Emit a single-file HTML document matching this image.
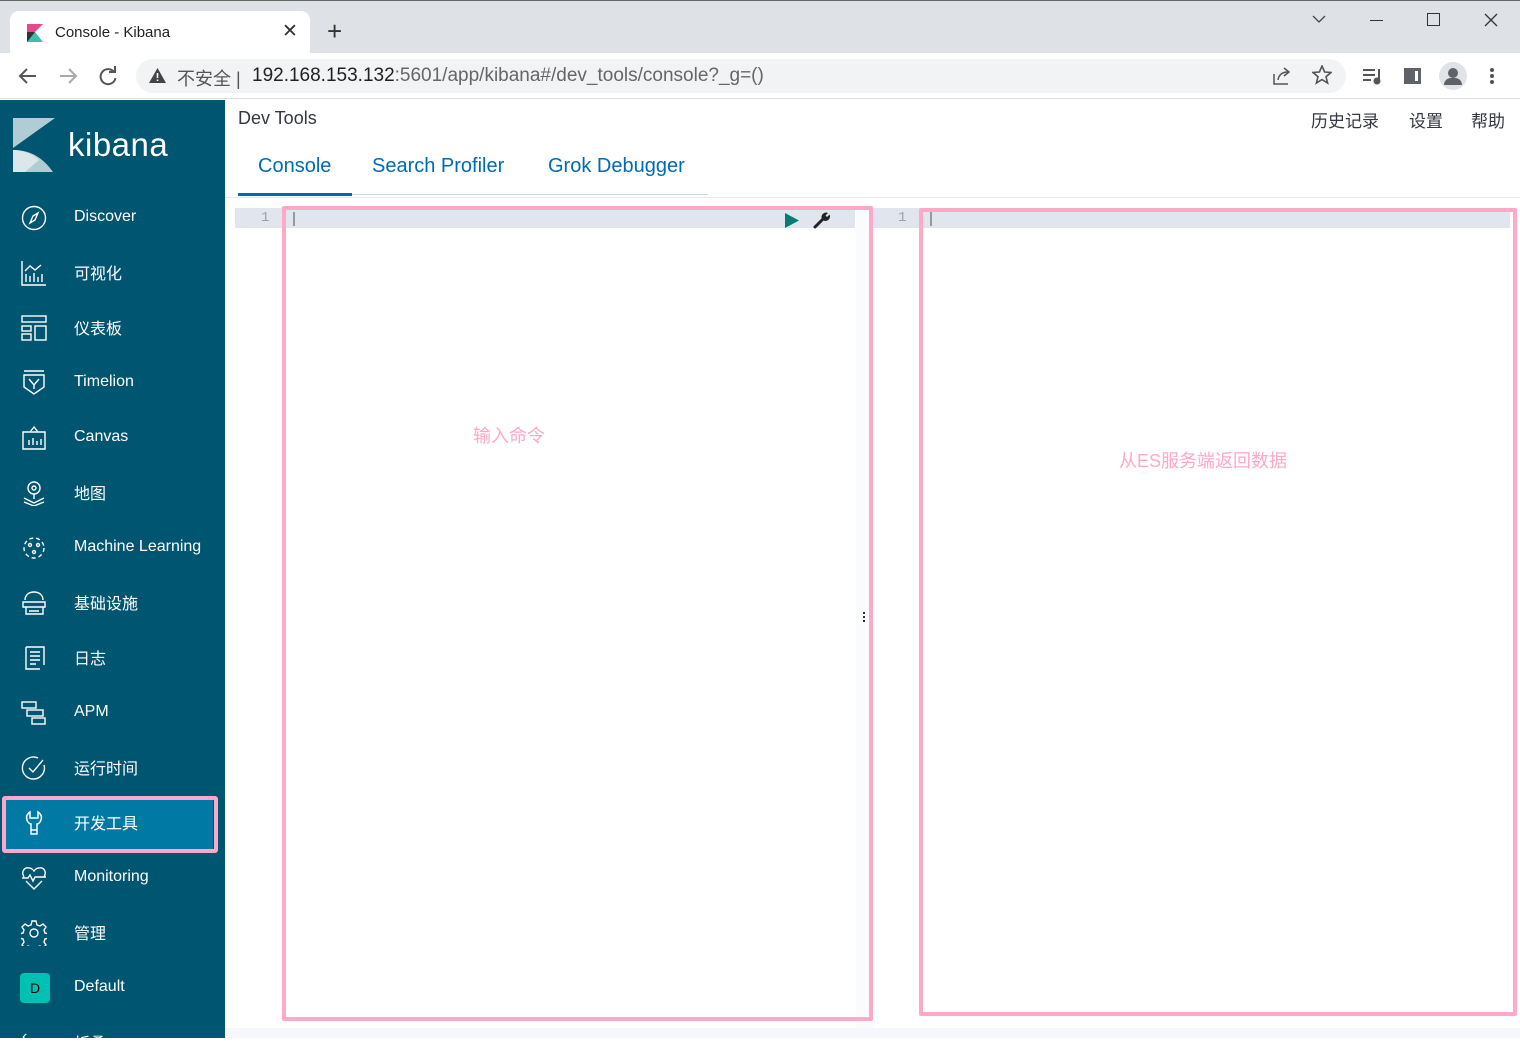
<!DOCTYPE html>
<html><head><meta charset="utf-8"><style>
*{margin:0;padding:0;box-sizing:border-box}
body{width:1520px;height:1038px;overflow:hidden;font-family:"Liberation Sans","Noto Sans CJK SC",sans-serif;background:#fff;position:relative}
.abs{position:absolute}
.tabbar{left:0;top:0;width:1520px;height:53px;background:#dee1e6;border-top:1px solid #666}
.tab{left:10px;top:11px;width:300px;height:43px;background:#fff;border-radius:9px 9px 0 0}
.toolbar{left:0;top:53px;width:1520px;height:46px;background:#fff;border-bottom:1px solid #ddd}
.omni{left:136px;top:59px;width:1210px;height:34px;background:#f1f3f4;border-radius:17px}
.side{left:0;top:100px;width:225px;height:938px;background:#005571}
.nav{position:absolute;left:0;width:225px;height:55px;color:#fff;font-size:16px}
.nav span{position:absolute;left:74px;top:50%;transform:translateY(-55%)}
.nav svg{position:absolute;left:21px;top:15px}
.pink{position:absolute;border:4px solid #ffa8c8}
</style></head><body>
<div class="abs tabbar"></div>
<div class="abs tab"></div>
<svg class="abs" style="left:27px;top:24px" width="16" height="18" viewBox="0 0 16 18"><path d="M0 0h16L8 8H0z" fill="#e8488b"/><path d="M0 8h8l8 10H0z" fill="#3ebeb0"/><path d="M0 8h8L0 18z" fill="#333"/></svg>
<div class="abs" style="left:55px;top:24px;font-size:15px;color:#222">Console - Kibana</div>
<div class="abs" style="left:282px;top:20px;font-size:19px;color:#333">✕</div>
<div class="abs" style="left:327px;top:16px;font-size:26px;color:#333">+</div>
<svg class="abs" style="left:1312px;top:14px" width="14" height="10"><path d="M1 2l6 6 6-6" fill="none" stroke="#444" stroke-width="1.3"/></svg>
<div class="abs" style="left:1370px;top:20px;width:13px;height:1px;background:#333"></div>
<div class="abs" style="left:1427px;top:13px;width:13px;height:13px;border:1px solid #333"></div>
<svg class="abs" style="left:1484px;top:13px" width="14" height="14"><path d="M1 1l12 12M13 1L1 13" stroke="#333" stroke-width="1.3"/></svg>
<div class="abs toolbar"></div>
<svg class="abs" style="left:18px;top:67px" width="20" height="18"><path d="M18 9H3M9 2L2 9l7 7" fill="none" stroke="#555" stroke-width="2"/></svg>
<svg class="abs" style="left:58px;top:67px" width="20" height="18"><path d="M2 9h15M11 2l7 7-7 7" fill="none" stroke="#aaa" stroke-width="2"/></svg>
<svg class="abs" style="left:98px;top:66px" width="20" height="20"><path d="M16 6A7.5 7.5 0 1 0 17.5 12" fill="none" stroke="#555" stroke-width="2"/><path d="M11 6h6V0" fill="none" stroke="#555" stroke-width="2"/></svg>
<div class="abs omni"></div>
<svg class="abs" style="left:149px;top:68px" width="17" height="15"><path d="M8.5 0L17 15H0z" fill="#444"/><path d="M8.5 5v5M8.5 11.5v1.5" stroke="#fff" stroke-width="1.6"/></svg>
<div class="abs" style="left:177px;top:65px;font-size:18px;color:#555">不安全 | </div>
<div class="abs" style="left:252px;top:65px;font-size:19px;color:#202124">192.168.153.132<span style="color:#666">:5601/app/kibana#/dev_tools/console?_g=()</span></div>
<svg class="abs" style="left:1272px;top:66px" width="20" height="19" fill="none" stroke="#555" stroke-width="1.5"><path d="M2 8v10h14M6 14c1-6 5-8 10-8M12 2l5 4-5 4"/></svg>
<svg class="abs" style="left:1312px;top:65px" width="20" height="20"><path d="M10 1l2.6 6 6.4.5-5 4.2 1.6 6.3L10 14.6 4.4 18l1.6-6.3-5-4.2L7.4 7z" fill="none" stroke="#555" stroke-width="1.6"/></svg>
<svg class="abs" style="left:1362px;top:67px" width="22" height="18" fill="none" stroke="#555" stroke-width="2"><path d="M1 3h12M1 8h12M1 13h8M17 2v12"/><circle cx="15" cy="14" r="2.5" fill="#555"/></svg>
<div class="abs" style="left:1404px;top:68px;width:17px;height:16px;border:3px solid #5f6368;border-left-width:11px;background:#fff"></div>
<div class="abs" style="left:1439px;top:62px;width:28px;height:28px;border-radius:50%;background:#e0e3e7"></div>
<div class="abs" style="left:1448px;top:68px;width:10px;height:10px;border-radius:50%;background:#5f6368"></div>
<div class="abs" style="left:1444px;top:78px;width:18px;height:7px;border-radius:8px 8px 0 0;background:#5f6368"></div>
<div class="abs" style="left:1490px;top:68px;width:4px;height:4px;border-radius:50%;background:#555;box-shadow:0 6px 0 #555,0 12px 0 #555"></div>

<div class="abs side">
<svg class="abs" style="left:13px;top:18px" width="42" height="54" viewBox="0 0 42 54"><path d="M0 0h42L0 30z" fill="#b0ccd5"/><path d="M0 32c18 0 30 8 40 22H0z" fill="#b0ccd5"/><path d="M0 32c10 0 20 4 26 10L12 54H0z" fill="#dbe7eb"/></svg>
<div class="abs" style="left:68px;top:26px;font-size:33px;color:#fff;letter-spacing:0.5px">kibana</div>
</div>
<div class="nav" style="top:190px"><svg width="26" height="26" viewBox="0 0 26 26" fill="none" stroke="#fff" stroke-width="1.4"><circle cx="13" cy="13" r="11.5"/><path d="M17 8l-3 7-5 3 3-7z"/></svg><span>Discover</span></div>
<div class="nav" style="top:245px"><svg width="26" height="26" viewBox="0 0 26 26" fill="none" stroke="#fff" stroke-width="1.4"><path d="M1 1v24h24M5 22v-8M9 22v-6M13 22v-9M17 22v-5M21 22v-8M4 11l5-5 5 4 6-5"/></svg><span>可视化</span></div>
<div class="nav" style="top:300px"><svg width="26" height="26" viewBox="0 0 26 26" fill="none" stroke="#fff" stroke-width="1.4"><rect x="1" y="1" width="24" height="6"/><rect x="1" y="11" width="9" height="5"/><rect x="1" y="19" width="9" height="6"/><rect x="14" y="11" width="11" height="14"/></svg><span>仪表板</span></div>
<div class="nav" style="top:355px"><svg width="26" height="26" viewBox="0 0 26 26" fill="none" stroke="#fff" stroke-width="1.4"><path d="M3 1h20M3 5h20v12l-10 7-10-7zM8 9l5 6 5-6M13 15v4"/></svg><span>Timelion</span></div>
<div class="nav" style="top:410px"><svg width="26" height="26" viewBox="0 0 26 26" fill="none" stroke="#fff" stroke-width="1.4"><path d="M13 2l-4 5h8zM2 7h22v17H2zM8 20v-5M12 20v-7M16 20v-4M20 20v-6"/></svg><span>Canvas</span></div>
<div class="nav" style="top:465px"><svg width="26" height="26" viewBox="0 0 26 26" fill="none" stroke="#fff" stroke-width="1.4"><circle cx="13" cy="8" r="6"/><circle cx="13" cy="8" r="2"/><path d="M13 14v5M3 18l10 5 10-5M3 22l10 4 10-4"/></svg><span>地图</span></div>
<div class="nav" style="top:520px"><svg width="26" height="26" viewBox="0 0 26 26" fill="none" stroke="#fff" stroke-width="1.4"><circle cx="13" cy="13" r="10" stroke-dasharray="4 3"/><circle cx="9" cy="10" r="1.5"/><circle cx="17" cy="10" r="1.5"/><circle cx="13" cy="17" r="1.5"/></svg><span>Machine Learning</span></div>
<div class="nav" style="top:575px"><svg width="26" height="26" viewBox="0 0 26 26" fill="none" stroke="#fff" stroke-width="1.4"><path d="M4 10c0-5 4-8 9-8s9 3 9 8M2 12h22v5H2zM5 17v7h17v-7M8 21h10"/></svg><span>基础设施</span></div>
<div class="nav" style="top:630px"><svg width="26" height="26" viewBox="0 0 26 26" fill="none" stroke="#fff" stroke-width="1.4"><path d="M5 2h18v18M5 2v22h14M9 7h10M9 11h10M9 15h10M9 19h6"/></svg><span>日志</span></div>
<div class="nav" style="top:685px"><svg width="26" height="26" viewBox="0 0 26 26" fill="none" stroke="#fff" stroke-width="1.4"><rect x="1" y="2" width="14" height="6"/><rect x="6" y="10" width="16" height="6"/><rect x="11" y="18" width="13" height="6"/></svg><span>APM</span></div>
<div class="nav" style="top:740px"><svg width="26" height="26" viewBox="0 0 26 26" fill="none" stroke="#fff" stroke-width="1.4"><path d="M23 10a11 11 0 1 1-6-7M8 13l4 4 10-12"/></svg><span>运行时间</span></div>
<div class="nav" style="left:6px;width:207px;height:51px;background:#0079a5;top:800px"></div>
<div class="pink" style="left:2px;top:796px;width:216px;height:57px;border-radius:3px"></div>
<div class="nav" style="top:795px;background:transparent"><svg width="26" height="26" viewBox="0 0 26 26" fill="none" stroke="#fff" stroke-width="1.5"><path d="M9 2v6h8V2c3 2 4 5 3 8s-3 4-4 4v10h-6V14c-1 0-3-1-4-4s0-6 3-8zM10 20h6"/></svg><span>开发工具</span></div>
<div class="nav" style="top:850px"><svg width="26" height="26" viewBox="0 0 26 26" fill="none" stroke="#fff" stroke-width="1.4"><path d="M3 12C0 7 3 2 8 3c3 0 5 3 5 3s2-3 5-3c5-1 8 4 5 9M1 13h6l2-3 3 6 2-4h11M5 16l8 8 8-8"/></svg><span>Monitoring</span></div>
<div class="nav" style="top:905px"><svg width="26" height="26" viewBox="0 0 26 26" fill="none" stroke="#fff" stroke-width="1.4"><path d="M11 1h4l1 4 3 1 3-2 3 3-2 3 1 3 4 1v4l-4 1-1 3 2 3-3 3-3-2-3 1-1 4h-4l-1-4-3-1-3 2-3-3 2-3-1-3-4-1v-4l4-1 1-3-2-3 3-3 3 2 3-1z"/><circle cx="13" cy="13" r="4"/></svg><span>管理</span></div>
<div class="nav" style="top:960px"><div class="abs" style="left:20px;top:13px;width:30px;height:30px;background:#00bfb3;border-radius:4px;color:#000;font-size:14px;text-align:center;line-height:30px">D</div><span>Default</span></div>
<div class="abs" style="left:22px;top:1028px;font-size:16px;color:#fff">‹</div>
<div class="abs" style="left:74px;top:1030px;font-size:16px;color:#fff">折叠</div>

<div class="abs" style="left:238px;top:108px;font-size:18px;color:#343741">Dev Tools</div>
<div class="abs" style="left:1311px;top:107px;font-size:17px;color:#343741">历史记录</div>
<div class="abs" style="left:1409px;top:107px;font-size:17px;color:#343741">设置</div>
<div class="abs" style="left:1471px;top:107px;font-size:17px;color:#343741">帮助</div>
<div class="abs" style="left:258px;top:155px;font-size:20px;color:#006bb4">Console</div>
<div class="abs" style="left:372px;top:155px;font-size:20px;color:#006bb4">Search Profiler</div>
<div class="abs" style="left:548px;top:155px;font-size:20px;color:#006bb4">Grok Debugger</div>
<div class="abs" style="left:238px;top:194px;width:470px;height:1px;background:#d3dae6"></div>
<div class="abs" style="left:238px;top:193px;width:114px;height:3px;background:#006bb4"></div>
<div class="abs" style="left:225px;top:197px;width:1295px;height:1px;background:#e6e9ee"></div>

<div class="abs" style="left:235px;top:208px;width:620px;height:20px;background:#e0e5ee"></div>
<div class="abs" style="left:261px;top:210px;font-size:14px;color:#98a2b3;font-family:'Liberation Mono',monospace">1</div>
<div class="abs" style="left:293px;top:212px;width:2px;height:14px;background:#999"></div>
<svg class="abs" style="left:785px;top:213px" width="14" height="15"><path d="M0 0l14 7.5L0 15z" fill="#017d73"/></svg>
<svg class="abs" style="left:813px;top:211px" width="18" height="18"><path d="M2 16l8-8" stroke="#222" stroke-width="3" stroke-linecap="round"/><path d="M9 8a4.5 4.5 0 0 1 6-6l-2.5 2.5 1.5 1.5 2.5-2.5a4.5 4.5 0 0 1-6 6z" fill="#222"/></svg>
<div class="abs" style="left:856px;top:208px;width:17px;height:820px;background:#fafbfd"></div>
<div class="abs" style="left:863px;top:612px;width:2px;height:2px;background:#333;box-shadow:0 4px 0 #333,0 8px 0 #333"></div>
<div class="abs" style="left:873px;top:208px;width:637px;height:20px;background:#e0e5ee"></div>
<div class="abs" style="left:898px;top:210px;font-size:14px;color:#98a2b3;font-family:'Liberation Mono',monospace">1</div>
<div class="abs" style="left:930px;top:212px;width:2px;height:14px;background:#999"></div>
<div class="abs" style="left:225px;top:1028px;width:1295px;height:10px;background:#f5f7fa"></div>

<div class="pink" style="left:282px;top:206px;width:591px;height:815px;border-radius:2px"></div>
<div class="pink" style="left:919px;top:208px;width:598px;height:808px;border-radius:2px"></div>
<div class="abs" style="left:473px;top:422px;font-size:18px;color:#ffa8c8">输入命令</div>
<div class="abs" style="left:1119px;top:447px;font-size:18px;color:#ffa8c8">从ES服务端返回数据</div>
</body></html>
